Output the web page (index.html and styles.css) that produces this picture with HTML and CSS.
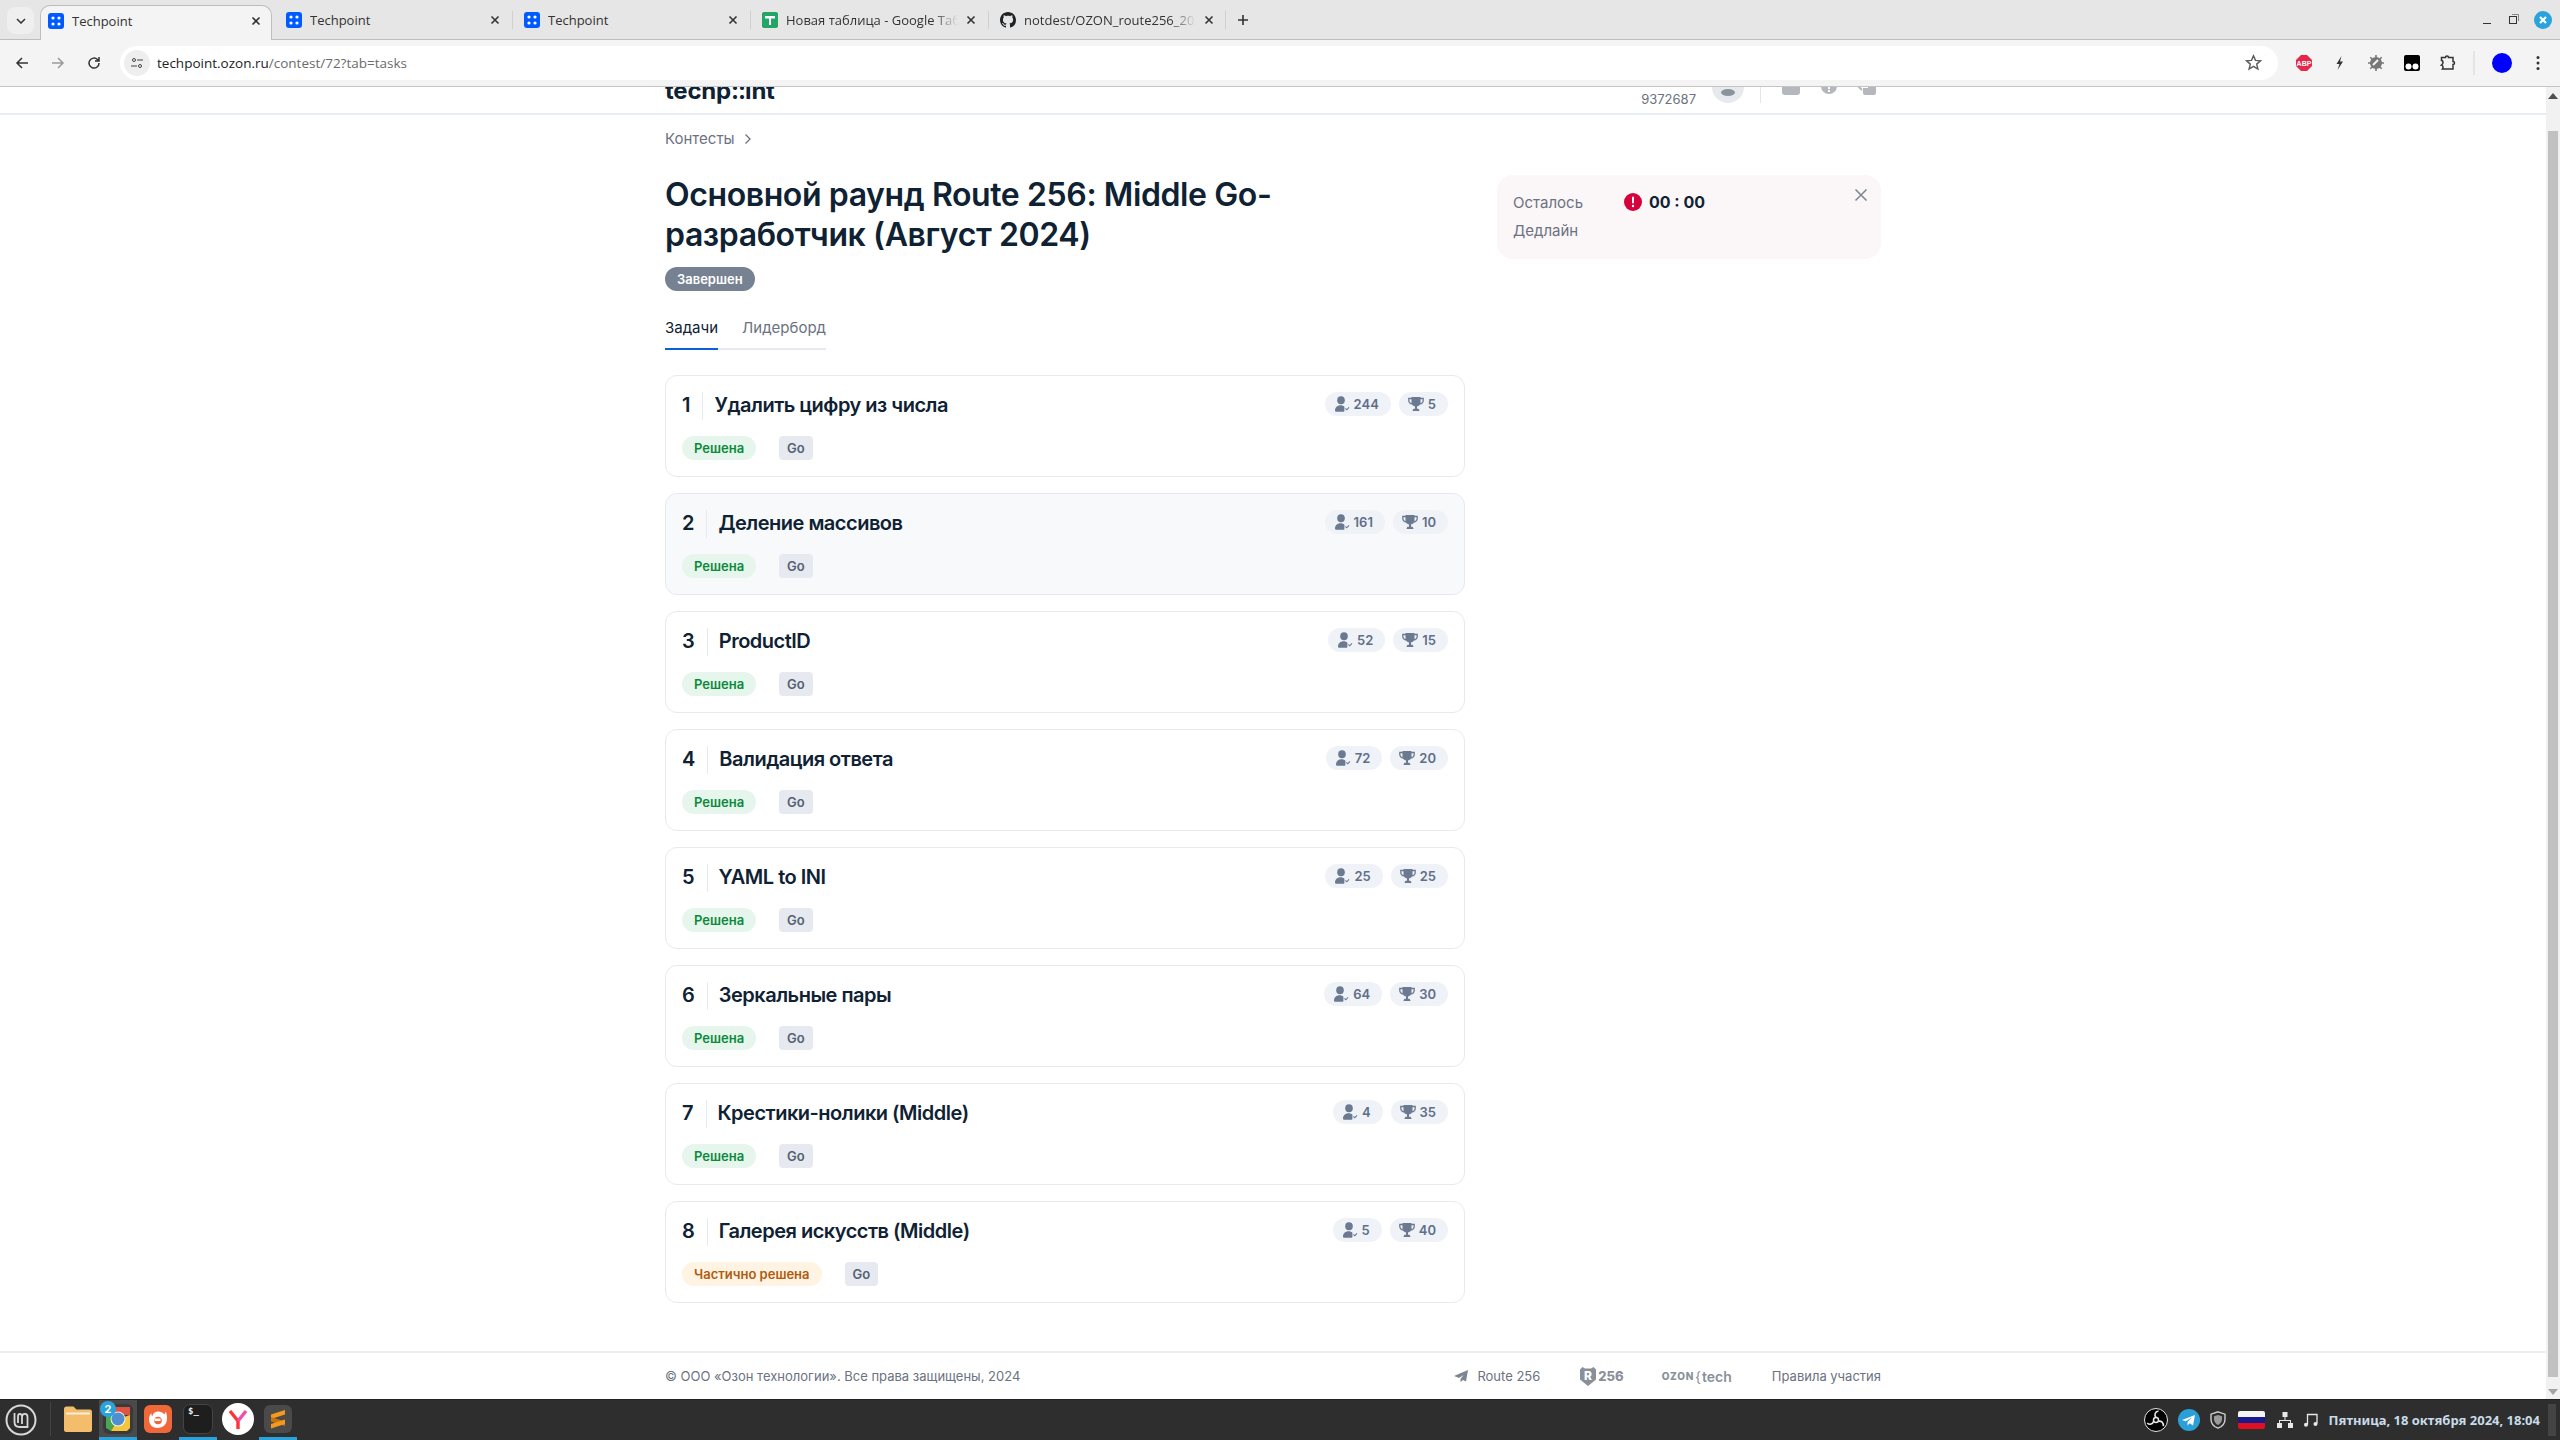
FILE: index.html
```html
<!DOCTYPE html>
<html lang="ru">
<head>
    <meta charset="UTF-8">
    <meta name="viewport" content="width=device-width, initial-scale=1.0">
    <title>Techpoint</title>
    <link rel="stylesheet" href="styles.css">
</head>
<body>
    <!-- shared icons -->
    <svg class="sprite" aria-hidden="true">
        <symbol id="fav-tp" viewBox="0 0 16 16">
            <rect width="16" height="16" rx="3" fill="#005bff"/>
            <circle cx="5" cy="5" r="1.6" fill="#fff"/><circle cx="11" cy="5" r="1.6" fill="#fff"/>
            <circle cx="5" cy="11" r="1.6" fill="#fff"/><circle cx="11" cy="11" r="1.6" fill="#fff"/>
        </symbol>
        <symbol id="i-x" viewBox="0 0 10 10">
            <path d="M1.5 1.5l7 7M8.500 1.500l-7 7" stroke="#333" stroke-width="1.600" fill="none"/>
        </symbol>
        <symbol id="i-user" viewBox="0 0 16 16">
            <ellipse cx="7" cy="4.200" rx="3.800" ry="4" fill="#6b7a90"/>
            <path d="M1 14.500c0-3.200 2.400-5.300 5.500-5.300 1.800 0 3 .5 3.900 1.500v4.300c0 .4-.3.700-.7.700H1.800c-.5 0-.8-.5-.8-1.200z" fill="#6b7a90"/>
            <path d="M11.400 12.400l1.400 1.400 2.200-2.400" stroke="#6b7a90" stroke-width="1.100" fill="none"/>
        </symbol>
        <symbol id="i-cup" viewBox="0 0 16 16">
            <path d="M3.500 1h9v5.300c0 2.600-2 4.400-4.500 4.400s-4.500-1.800-4.500-4.400z" fill="#6b7a90"/>
            <path d="M4 2.500H.8v2C.8 6.500 2.200 7.700 4.500 8M12 2.500h3.200v2c0 2-1.400 3.200-3.700 3.500" stroke="#6b7a90" stroke-width="1.300" fill="none"/>
            <path d="M7 10h2v2.700h1.600l1 2.300H4.400l1-2.300H7z" fill="#6b7a90"/>
        </symbol>
    </svg>

    <div class="browser">
        <!-- tab strip -->
        <div class="tabstrip">
            <div class="tab-menu">
                <svg width="10" height="6" viewBox="0 0 10 6"><path d="M1 1l4 4 4-4" stroke="#333" stroke-width="1.500" fill="none"/></svg>
            </div>
            <div class="tab tab-active">
                <svg class="tab-icon"><use href="#fav-tp"/></svg>
                <span class="tab-title">Techpoint</span>
                <svg class="tab-close"><use href="#i-x"/></svg>
            </div>
            <div class="tab">
                <svg class="tab-icon"><use href="#fav-tp"/></svg>
                <span class="tab-title">Techpoint</span>
                <svg class="tab-close"><use href="#i-x"/></svg>
            </div>
            <div class="tab tab-sep">
                <svg class="tab-icon"><use href="#fav-tp"/></svg>
                <span class="tab-title">Techpoint</span>
                <svg class="tab-close"><use href="#i-x"/></svg>
            </div>
            <div class="tab tab-sep">
                <svg class="tab-icon" viewBox="0 0 16 16">
                    <rect width="16" height="16" rx="2" fill="#23a566"/>
                    <path d="M3 4h10v2.500H9V13H7V6.500H3z" fill="#fff"/>
                </svg>
                <span class="tab-title tab-fade">Новая таблица - Google Таблицы</span>
                <svg class="tab-close"><use href="#i-x"/></svg>
            </div>
            <div class="tab tab-sep tab-last">
                <svg class="tab-icon" viewBox="0 0 16 16">
                    <path fill="#1f2328" d="M8 0C3.58 0 0 3.58 0 8c0 3.54 2.29 6.53 5.47 7.59.4.07.55-.17.55-.38 0-.19-.01-.82-.01-1.49-2.01.37-2.53-.49-2.69-.94-.09-.23-.48-.94-.82-1.13-.28-.15-.68-.52-.01-.53.63-.01 1.08.58 1.23.82.72 1.21 1.87.87 2.33.66.07-.52.28-.87.51-1.07-1.78-.2-3.64-.89-3.64-3.95 0-.87.31-1.59.82-2.15-.08-.2-.36-1.02.08-2.12 0 0 .67-.21 2.2.82.64-.18 1.32-.27 2-.27.68 0 1.36.09 2 .27 1.53-1.04 2.2-.82 2.2-.82.44 1.1.16 1.92.08 2.12.51.56.82 1.27.82 2.15 0 3.07-1.87 3.75-3.65 3.95.29.25.54.73.54 1.48 0 1.07-.01 1.930-.01 2.200 0 .21.15.46.55.38A8.013 8.013 0 0016 8c0-4.420-3.580-8-8-8z"/>
                </svg>
                <span class="tab-title tab-fade">notdest/OZON_route256_2024</span>
                <svg class="tab-close"><use href="#i-x"/></svg>
            </div>
            <div class="tab-new">
                <svg width="12" height="12" viewBox="0 0 12 12"><path d="M6 1v10M1 6h10" stroke="#333" stroke-width="1.600"/></svg>
            </div>
            <div class="win-controls">
                <svg width="14" height="14" viewBox="0 0 14 14"><path d="M3 10.500h8" stroke="#333" stroke-width="1"/></svg>
                <svg width="14" height="14" viewBox="0 0 14 14"><rect x="2.500" y="3.500" width="7" height="7" fill="none" stroke="#333"/><path d="M5 1.500h6.500V8" fill="none" stroke="#888"/></svg>
                <svg width="18" height="18" viewBox="0 0 18 18">
                    <circle cx="9" cy="9" r="9" fill="#2aa3dc"/>
                    <path d="M6 6l6 6M12 6l-6 6" stroke="#fff" stroke-width="2.200"/>
                </svg>
            </div>
        </div>

        <!-- toolbar -->
        <div class="toolbar">
            <svg class="nav-btn" viewBox="0 0 16 16"><path d="M14 8H3M8 3L3 8l5 5" stroke="#333" stroke-width="1.500" fill="none"/></svg>
            <svg class="nav-btn" viewBox="0 0 16 16"><path d="M2 8h11M8 3l5 5-5 5" stroke="#9a9a9a" stroke-width="1.500" fill="none"/></svg>
            <svg class="nav-btn" viewBox="0 0 16 16"><path d="M13 8a5 5 0 1 1-1.500-3.500L13 6M13 2v4H9" stroke="#333" stroke-width="1.500" fill="none"/></svg>
            <div class="urlbar">
                <div class="site-icon">
                    <svg width="14" height="14" viewBox="0 0 14 14"><circle cx="4" cy="4" r="1.500" fill="none" stroke="#444"/><path d="M7 4h6M1 10h6" stroke="#444"/><circle cx="10" cy="10" r="1.500" fill="none" stroke="#444"/></svg>
                </div>
                <span class="url"><span class="url-host">techpoint.ozon.ru</span>/contest/72?tab=tasks</span>
                <svg class="url-star" width="17" height="17" viewBox="0 0 17 17"><path d="M8.500 1.800l2 4.600 5 .4-3.800 3.300 1.200 4.900-4.400-2.600-4.400 2.600 1.200-4.900L1.500 6.800l5-.4z" fill="none" stroke="#5a5a5a" stroke-width="1.400"/></svg>
            </div>
            <div class="ext-list">
                <svg class="ext" viewBox="0 0 16 16">
                    <path d="M5 0h6l5 5v6l-5 5H5l-5-5V5z" fill="#e8264a"/>
                    <text x="8" y="10.500" class="abp">ABP</text>
                </svg>
                <svg class="ext" viewBox="0 0 16 16"><path d="M9.500 1L4.500 9h3l-2 6 5.500-8.500H8z" fill="#333"/></svg>
                <svg class="ext" viewBox="0 0 16 16">
                    <circle cx="8" cy="8" r="6" fill="#777"/>
                    <path d="M8 0v3M8 13v3M0 8h3M13 8h3M2.300 2.300l2 2M11.700 11.700l2 2M13.700 2.300l-2 2M4.300 11.700l-2 2" stroke="#777" stroke-width="1.600"/>
                    <path d="M5 10l5-5" stroke="#f4f4f4" stroke-width="2"/>
                </svg>
                <svg class="ext" viewBox="0 0 16 16">
                    <rect width="16" height="16" rx="2" fill="#000"/>
                    <circle cx="4.500" cy="11.500" r="3" fill="#fff"/><circle cx="11.500" cy="11.500" r="3" fill="#fff"/>
                </svg>
                <svg class="ext" viewBox="0 0 16 16"><path d="M1.500 2.500h4c0-2 3-2 3 0h4.500v4c2 0 2 3 0 3v4.500H2.500c1.500-2-.5-4-1-4 2-1.500 2-4.500 0-4.500z" fill="none" stroke="#333" stroke-width="1.500"/></svg>
                <div class="ext-sep"></div>
                <div class="profile"></div>
                <svg class="ext ext-kebab" viewBox="0 0 4 16"><circle cx="2" cy="2.500" r="1.500" fill="#333"/><circle cx="2" cy="8" r="1.500" fill="#333"/><circle cx="2" cy="13.500" r="1.500" fill="#333"/></svg>
            </div>
        </div>

        <div class="viewport">
            <div class="page">
                <!-- site header, scrolled so the top is cut off -->
                <header class="site-header">
                    <div class="wrap header-row">
                        <div class="logo">techp<span class="logo-dots">::</span>int</div>
                        <div class="header-right">
                            <span class="user-id">9372687</span>
                            <div class="avatar"><div class="avatar-shape"></div></div>
                            <div class="header-sep"></div>
                            <svg class="head-icon" viewBox="0 0 18 26"><rect x="0" width="18" height="26" rx="3" fill="#b4b8bc"/><path d="M1 13l5-3 4 2 6-4" stroke="#fff" fill="none"/></svg>
                            <svg class="head-icon" viewBox="0 0 18 26"><circle cx="9" cy="17" r="8" fill="#b4b8bc"/><rect x="8" y="13" width="2" height="7" fill="#fff"/><rect x="8" y="21" width="2" height="2" fill="#fff"/></svg>
                            <svg class="head-icon" viewBox="0 0 18 26"><rect x="5" width="13" height="26" rx="2" fill="#b4b8bc"/><path d="M0 17h10M4 13l-4 4 4 4" stroke="#b4b8bc" stroke-width="2" fill="none"/><path d="M5 15h5v4H5z" fill="#fff"/></svg>
                        </div>
                    </div>
                </header>

                <main class="wrap content">
                    <div class="content-main">
                        <nav class="breadcrumb">
                            <span>Контесты</span>
                            <svg width="8" height="12" viewBox="0 0 8 12"><path d="M1.500 1.500L6 6l-4.500 4.500" stroke="#6b7280" stroke-width="1.300" fill="none"/></svg>
                        </nav>
                        <h1 class="contest-title">Основной раунд Route 256: Middle Go-разработчик (Август 2024)</h1>
                        <span class="badge-done">Завершен</span>
                        <div class="tabs">
                            <div class="tabs-item tabs-item-active">Задачи</div>
                            <div class="tabs-item">Лидерборд</div>
                        </div>

                        <div class="task-list">
                            <div class="task">
                                <div class="task-top">
                                    <span class="task-num">1</span>
                                    <span class="task-name">Удалить цифру из числа</span>
                                    <div class="chips">
                                        <span class="chip"><svg class="chip-icon"><use href="#i-user"/></svg>244</span>
                                        <span class="chip"><svg class="chip-icon"><use href="#i-cup"/></svg>5</span>
                                    </div>
                                </div>
                                <div class="task-tags"><span class="status">Решена</span><span class="lang">Go</span></div>
                            </div>
                            <div class="task task-hover">
                                <div class="task-top">
                                    <span class="task-num">2</span>
                                    <span class="task-name">Деление массивов</span>
                                    <div class="chips">
                                        <span class="chip"><svg class="chip-icon"><use href="#i-user"/></svg>161</span>
                                        <span class="chip"><svg class="chip-icon"><use href="#i-cup"/></svg>10</span>
                                    </div>
                                </div>
                                <div class="task-tags"><span class="status">Решена</span><span class="lang">Go</span></div>
                            </div>
                            <div class="task">
                                <div class="task-top">
                                    <span class="task-num">3</span>
                                    <span class="task-name">ProductID</span>
                                    <div class="chips">
                                        <span class="chip"><svg class="chip-icon"><use href="#i-user"/></svg>52</span>
                                        <span class="chip"><svg class="chip-icon"><use href="#i-cup"/></svg>15</span>
                                    </div>
                                </div>
                                <div class="task-tags"><span class="status">Решена</span><span class="lang">Go</span></div>
                            </div>
                            <div class="task">
                                <div class="task-top">
                                    <span class="task-num">4</span>
                                    <span class="task-name">Валидация ответа</span>
                                    <div class="chips">
                                        <span class="chip"><svg class="chip-icon"><use href="#i-user"/></svg>72</span>
                                        <span class="chip"><svg class="chip-icon"><use href="#i-cup"/></svg>20</span>
                                    </div>
                                </div>
                                <div class="task-tags"><span class="status">Решена</span><span class="lang">Go</span></div>
                            </div>
                            <div class="task">
                                <div class="task-top">
                                    <span class="task-num">5</span>
                                    <span class="task-name">YAML to INI</span>
                                    <div class="chips">
                                        <span class="chip"><svg class="chip-icon"><use href="#i-user"/></svg>25</span>
                                        <span class="chip"><svg class="chip-icon"><use href="#i-cup"/></svg>25</span>
                                    </div>
                                </div>
                                <div class="task-tags"><span class="status">Решена</span><span class="lang">Go</span></div>
                            </div>
                            <div class="task">
                                <div class="task-top">
                                    <span class="task-num">6</span>
                                    <span class="task-name">Зеркальные пары</span>
                                    <div class="chips">
                                        <span class="chip"><svg class="chip-icon"><use href="#i-user"/></svg>64</span>
                                        <span class="chip"><svg class="chip-icon"><use href="#i-cup"/></svg>30</span>
                                    </div>
                                </div>
                                <div class="task-tags"><span class="status">Решена</span><span class="lang">Go</span></div>
                            </div>
                            <div class="task">
                                <div class="task-top">
                                    <span class="task-num">7</span>
                                    <span class="task-name">Крестики-нолики (Middle)</span>
                                    <div class="chips">
                                        <span class="chip"><svg class="chip-icon"><use href="#i-user"/></svg>4</span>
                                        <span class="chip"><svg class="chip-icon"><use href="#i-cup"/></svg>35</span>
                                    </div>
                                </div>
                                <div class="task-tags"><span class="status">Решена</span><span class="lang">Go</span></div>
                            </div>
                            <div class="task">
                                <div class="task-top">
                                    <span class="task-num">8</span>
                                    <span class="task-name">Галерея искусств (Middle)</span>
                                    <div class="chips">
                                        <span class="chip"><svg class="chip-icon"><use href="#i-user"/></svg>5</span>
                                        <span class="chip"><svg class="chip-icon"><use href="#i-cup"/></svg>40</span>
                                    </div>
                                </div>
                                <div class="task-tags"><span class="status status-partial">Частично решена</span><span class="lang">Go</span></div>
                            </div>
                        </div>
                    </div>

                    <aside class="timer">
                        <svg class="timer-close" width="14" height="14" viewBox="0 0 14 14"><path d="M1.500 1.500l11 11M12.500 1.500l-11 11" stroke="#7d8590" stroke-width="1.500"/></svg>
                        <div class="timer-row">
                            <span class="timer-label">Осталось</span>
                            <svg class="timer-alert" width="18" height="18" viewBox="0 0 18 18">
                                <circle cx="9" cy="9" r="9" fill="#d6003c"/>
                                <rect x="8" y="3.500" width="2" height="7" rx="1" fill="#fff"/>
                                <circle cx="9" cy="13" r="1.200" fill="#fff"/>
                            </svg>
                            <span class="timer-value">00 : 00</span>
                        </div>
                        <div class="timer-row">
                            <span class="timer-label">Дедлайн</span>
                        </div>
                    </aside>
                </main>

                <footer class="site-footer">
                    <div class="wrap footer-row">
                        <span>© ООО «Озон технологии». Все права защищены, 2024</span>
                        <div class="footer-links">
                            <span class="footer-route">
                                <svg width="14" height="12" viewBox="0 0 14 12"><path d="M14 0L0 6l4 1.500 1 .5L9.500 5 6.500 9v3l2.500-2 3 1.500z" fill="#7d8590"/></svg>
                                Route 256
                            </span>
                            <span class="footer-r256">
                                <svg width="16" height="19" viewBox="0 0 16 19">
                                    <path d="M2.500 0L5 1.500h6L13.500 0 16 2.500v10L8 19 0 12.500v-10z" fill="#8a9099"/>
                                    <text x="8" y="13" class="r-mark">R</text>
                                </svg>
                                256
                            </span>
                            <span class="footer-ozon"><span class="footer-word">OZON</span><span class="footer-brace">{</span>tech</span>
                            <span>Правила участия</span>
                        </div>
                    </div>
                </footer>
            </div>

            <div class="scrollbar">
                <svg width="10" height="6" viewBox="0 0 10 6"><path d="M5 0l5 6H0z" fill="#505050"/></svg>
                <div class="scroll-thumb"></div>
                <svg width="10" height="6" viewBox="0 0 10 6"><path d="M0 0h10L5 6z" fill="#a3a3a3"/></svg>
            </div>
        </div>

        <!-- desktop panel -->
        <div class="taskbar">
            <div class="menu-btn">
                <svg width="32" height="32" viewBox="0 0 32 32">
                    <circle cx="16" cy="16" r="14.500" fill="none" stroke="#d8d8d8" stroke-width="2"/>
                    <path d="M9.500 9v9c0 3 2 5 5 5h8V13c0-4-5-4-5.500-.5V20M17 12.500c-.5-3.500-4-3.500-4 .5v6" fill="none" stroke="#d8d8d8" stroke-width="1.800"/>
                </svg>
            </div>
            <div class="panel-sep"></div>
            <div class="launcher">
                <div class="launch-item">
                    <svg width="28" height="26" viewBox="0 0 28 26">
                        <path d="M0 3c0-1.500 1-2.500 2.500-2.500h7l3 3H26c1 0 2 1 2 2V24c0 1-1 2-2 2H2c-1 0-2-1-2-2z" fill="#f3bd6c"/>
                        <path d="M2 6.500h24v2H2z" fill="#f7eddd"/>
                    </svg>
                </div>
                <div class="launch-item launch-active launch-running">
                    <svg width="30" height="30" viewBox="0 0 30 30">
                        <rect width="30" height="30" rx="6" fill="#3a3a3a"/>
                        <path d="M3 3h24v8H15z" fill="#e05345"/>
                        <path d="M3 6v18l5 3 7-12z" fill="#46a850"/>
                        <path d="M27 11v13l-3 3H8l7-12z" fill="#f2c53d"/>
                        <circle cx="15" cy="15" r="7.500" fill="#fff" fill-opacity=".85"/>
                        <circle cx="15" cy="15" r="6.500" fill="#4f8fd0"/>
                    </svg>
                    <span class="launch-badge">2</span>
                </div>
                <div class="launch-item">
                    <svg width="28" height="28" viewBox="0 0 28 28">
                        <rect width="28" height="28" rx="6" fill="#f0683a"/>
                        <path d="M14 6.500c3 0 5 1 6.500 3l1-3c1.500 2 1.500 5 1.500 7.500 0 5-4 9-9.500 9S5 19 5 14c0-2.500 1-4.500 2.500-6-.3 1.500 0 2.500.8 3.200C9 8.500 11 6.500 14 6.500z" fill="#fff"/>
                        <circle cx="14" cy="15.500" r="3.800" fill="#f0683a"/>
                        <path d="M10.500 13.500h6v2.500h-6z" fill="#fff"/>
                    </svg>
                </div>
                <div class="launch-item launch-running">
                    <div class="term-icon">$_</div>
                </div>
                <div class="launch-item">
                    <svg width="32" height="32" viewBox="0 0 32 32">
                        <circle cx="16" cy="16" r="16" fill="#fff"/>
                        <path d="M8 8l8 10v8" stroke="#f33" stroke-width="3.400" fill="none"/>
                        <path d="M24 8l-8 10" stroke="#ef4fa8" stroke-width="3.400" fill="none"/>
                    </svg>
                </div>
                <div class="launch-item launch-running">
                    <svg width="28" height="28" viewBox="0 0 28 28">
                        <rect width="28" height="28" rx="6" fill="#4a4a4a"/>
                        <path d="M21 5L7 9.500V14l14-4.500z" fill="#f59a1c"/>
                        <path d="M7 12l14 4.500V21L7 16.500z" fill="#c9720f"/>
                        <path d="M21 14.500V19L7 23.500V19z" fill="#f59a1c"/>
                    </svg>
                </div>
            </div>
            <div class="tray">
                <svg class="tray-icon" width="24" height="24" viewBox="0 0 24 24">
                    <circle cx="12" cy="12" r="11.500" fill="#000" stroke="#e5e5e5"/>
                    <circle cx="12" cy="12" r="2.500" fill="none" stroke="#e5e5e5" stroke-width="1.500"/>
                    <path d="M12 9.500C10 7 11 3.500 14.500 3M14.300 13.200c3-.5 5.500 1.500 5 5M9.700 13.200c-1 3-4 4-6.500 2" fill="none" stroke="#e5e5e5" stroke-width="1.600"/>
                </svg>
                <svg class="tray-icon" width="22" height="22" viewBox="0 0 22 22">
                    <circle cx="11" cy="11" r="11" fill="#2b9fd8"/>
                    <path d="M17 6L4 11l3.800 1.300L14 8.500 9.500 13v3.500l2.200-2.200 3.300 2.200z" fill="#fff"/>
                </svg>
                <svg class="tray-icon" width="16" height="18" viewBox="0 0 16 18">
                    <path d="M8 .8l7 2.400v5c0 4-3 7.500-7 9-4-1.500-7-5-7-9v-5z" fill="none" stroke="#cfcfcf" stroke-width="1.400"/>
                    <path d="M8 4l4 1.300v3c0 2.500-1.700 4.500-4 5.700-2.300-1.200-4-3.200-4-5.700v-3z" fill="#9a9a9a"/>
                </svg>
                <div class="flag"><span class="flag-w"></span><span class="flag-b"></span><span class="flag-r"></span></div>
                <svg class="tray-icon tray-net" width="16" height="16" viewBox="0 0 16 16" fill="#e8e8e8">
                    <rect x="5.500" y="0" width="5" height="5"/><rect x="0" y="11" width="5" height="5"/><rect x="11" y="11" width="5" height="5"/>
                    <path d="M7.500 5h1v3H14v3h-1V9H3v2H2V8h5.500z"/>
                </svg>
                <svg class="tray-icon" width="14" height="14" viewBox="0 0 14 14">
                    <path d="M3.500 11.500V1.500h9.500v9" fill="none" stroke="#e8e8e8" stroke-width="1.300"/>
                    <circle cx="2" cy="11.800" r="2" fill="#e8e8e8"/><circle cx="11.500" cy="11" r="2" fill="#e8e8e8"/>
                </svg>
                <span class="clock">Пятница, 18 октября 2024, 18:04</span>
                <div class="panel-grip"></div>
            </div>
        </div>
    </div>
</body>
</html>
```

FILE: styles.css
```css
/* Basic page setup */
* {
    box-sizing: border-box;
}

html,
body {
    margin: 0;
    height: 100%;
    overflow: hidden;
    background: #fff;
}

.sprite {
    display: none;
}

.browser {
    display: flex;
    flex-direction: column;
    height: 1440px;
    font-family: "Inter", "Liberation Sans", sans-serif;
}

/* Tab strip */
.tabstrip {
    display: flex;
    align-items: stretch;
    height: 40px;
    padding: 5px 0 0 7px;
    background: #e6e6e6;
    border-bottom: 1px solid #bdbdbd;
    font-family: "Open Sans", "Noto Sans", sans-serif;
    font-size: 13px;
    color: #333;
}

.tab-menu {
    display: flex;
    align-items: center;
    justify-content: center;
    width: 27px;
    height: 27px;
    margin: 2px 2px 0 0;
    border-radius: 8px;
    background: #efefef;
}

.tab {
    position: relative;
    display: flex;
    align-items: center;
    gap: 8px;
    width: 238px;
    height: 35px;
    padding: 0 12px 5px;
}

.tab-active {
    background: #f4f4f4;
    border: 1px solid #bdbdbd;
    border-bottom: none;
    border-radius: 10px 10px 0 0;
    margin: 0 2px 0 4px;
    width: 232px;
    padding: 0 10px 5px 7px;
}

.tab-sep::before {
    content: "";
    position: absolute;
    left: 0;
    top: 6px;
    bottom: 11px;
    width: 1px;
    background: #cfcfcf;
}

.tab-last::after {
    content: "";
    position: absolute;
    right: 0;
    top: 6px;
    bottom: 11px;
    width: 1px;
    background: #cfcfcf;
}

.tab-icon {
    width: 16px;
    height: 16px;
    flex: none;
}

.tab-title {
    flex: 1;
    min-width: 0;
    white-space: nowrap;
    overflow: hidden;
}

.tab-fade {
    -webkit-mask-image: linear-gradient(to right, #000 85%, transparent 100%);
    mask-image: linear-gradient(to right, #000 85%, transparent 100%);
}

.tab-close {
    width: 10px;
    height: 10px;
    flex: none;
}

.tab-new {
    display: flex;
    align-items: center;
    margin: 0 0 0 11px;
    height: 30px;
}

.win-controls {
    display: flex;
    align-items: center;
    gap: 13px;
    margin-left: auto;
    height: 30px;
    padding-right: 8px;
}

/* Toolbar */
.toolbar {
    display: flex;
    align-items: center;
    height: 47px;
    padding: 0 0 1px 14px;
    background: #f4f4f4;
    border-bottom: 1px solid #c4c4c4;
}

.nav-btn {
    width: 16px;
    height: 16px;
    margin-right: 20px;
    flex: none;
}

.urlbar {
    display: flex;
    align-items: center;
    width: 2158px;
    height: 34px;
    margin-left: -2px;
    padding: 0 16px 0 4px;
    border-radius: 17px;
    background: #fff;
}

.site-icon {
    display: flex;
    align-items: center;
    justify-content: center;
    width: 26px;
    height: 26px;
    margin-right: 7px;
    border-radius: 50%;
    background: #eeeeee;
}

.url {
    font-family: "Open Sans", "Noto Sans", sans-serif;
    font-size: 13.5px;
    color: #6c6c6c;
}

.url-host {
    color: #222;
}

.url-star {
    margin-left: auto;
}

.ext-list {
    display: flex;
    align-items: center;
    margin-left: 18px;
}

.ext {
    width: 16px;
    height: 16px;
    margin-right: 20px;
    flex: none;
}

.abp {
    font-family: "Liberation Sans", sans-serif;
    font-size: 7px;
    font-weight: 700;
    fill: #fff;
    text-anchor: middle;
}

.ext-sep {
    width: 2px;
    height: 24px;
    margin: 0 0 0 -3px;
    background: #e4e4e4;
}

.profile {
    width: 20px;
    height: 20px;
    margin: 0 24px 0 17px;
    border-radius: 50%;
    background: #0000ff;
}

.ext-kebab {
    width: 4px;
    margin: 0;
}

/* Page area */
.viewport {
    flex: 1;
    min-height: 0;
    display: flex;
}

.page {
    flex: 1;
    min-width: 0;
    display: flex;
    flex-direction: column;
}

.wrap {
    width: 1216px;
    margin: 0 auto;
}

.site-header {
    height: 28px;
    flex: none;
    overflow: hidden;
    border-bottom: 2px solid #e8edf2;
}

.header-row {
    display: flex;
    align-items: flex-end;
    justify-content: space-between;
    height: 26px;
}

.logo {
    font-size: 24px;
    font-weight: 700;
    line-height: 30px;
    color: #0f2233;
    letter-spacing: -0.2px;
    margin-bottom: 7px;
}

.logo-dots {
    letter-spacing: -1px;
}

.header-right {
    display: flex;
    align-items: flex-end;
}

.user-id {
    font-size: 13px;
    line-height: 16px;
    color: #6b7280;
    margin: 0 16px 6px 0;
}

.avatar {
    display: flex;
    align-items: flex-end;
    justify-content: center;
    width: 32px;
    height: 32px;
    margin-bottom: 10px;
    border-radius: 50%;
    background: #e6eaee;
}

.avatar-shape {
    width: 14px;
    height: 7px;
    margin-bottom: 7px;
    border-radius: 50%;
    background: #8b949c;
}

.header-sep {
    width: 1px;
    height: 16px;
    margin: 0 21px 10px 16px;
    background: #e3e6ea;
}

.head-icon {
    width: 18px;
    height: 26px;
    margin: 0 20px 18px 0;
}

.head-icon:last-child {
    margin-right: 5px;
}

/* Main content */
.content {
    display: flex;
    align-items: flex-start;
    gap: 32px;
    flex: 1;
    min-height: 0;
}

.content-main {
    width: 800px;
    flex: none;
}

.breadcrumb {
    display: flex;
    align-items: center;
    gap: 9px;
    margin-top: 14px;
    font-size: 15px;
    line-height: 20px;
    color: #6b7280;
}

.contest-title {
    margin: 26px 0 0;
    font-size: 32px;
    font-weight: 600;
    line-height: 40px;
    letter-spacing: -0.4px;
    color: #0f2233;
}

.badge-done {
    display: inline-block;
    height: 24px;
    margin-top: 12px;
    padding: 0 12px;
    border-radius: 12px;
    background: #768192;
    color: #fff;
    font-size: 13px;
    font-weight: 600;
    line-height: 24px;
    vertical-align: top;
}

.tabs {
    display: flex;
    width: fit-content;
    gap: 24px;
    margin-top: 26px;
    border-bottom: 2px solid #e6eaf0;
    font-size: 15px;
    color: #6b7280;
}

.tabs-item {
    height: 33px;
    margin-bottom: -2px;
    line-height: 20px;
    border-bottom: 2px solid transparent;
    padding-top: 1px;
}

.tabs-item-active {
    color: #0f2233;
    border-bottom-color: #0a5fe0;
}

.task-list {
    display: flex;
    flex-direction: column;
    gap: 16px;
    margin-top: 25px;
}

.task {
    height: 102px;
    padding: 16px;
    border: 1px solid #e6eaf0;
    border-radius: 12px;
    background: #fff;
}

.task-hover {
    background: #f8f9fb;
}

.task-top {
    display: flex;
    align-items: flex-start;
    height: 28px;
}

.task-num,
.task-name {
    font-size: 20px;
    font-weight: 600;
    line-height: 27px;
    color: #0f2233;
}

.task-name {
    letter-spacing: -0.5px;
}

.task-num {
    height: 28px;
    padding-right: 12px;
    margin-right: 11px;
    border-right: 1px solid #e6eaf0;
}

.chips {
    display: flex;
    gap: 8px;
    margin-left: auto;
}

.chip {
    display: flex;
    align-items: center;
    gap: 4px;
    height: 24px;
    padding: 0 12px 0 9px;
    border-radius: 12px;
    background: #eff2f7;
    color: #5f6f89;
    font-size: 13px;
    font-weight: 600;
}

.chip-icon {
    width: 16px;
    height: 16px;
    flex: none;
}

.task-tags {
    display: flex;
    gap: 23px;
    margin-top: 16px;
}

.status {
    height: 24px;
    padding: 0 12px;
    border-radius: 12px;
    background: #e6f6ec;
    color: #0b8a3c;
    font-size: 13px;
    font-weight: 600;
    line-height: 24px;
}

.status-partial {
    background: #fff4e3;
    color: #b25b0f;
}

.lang {
    height: 24px;
    padding: 0 8px;
    border-radius: 4px;
    background: #e6eaf0;
    color: #556070;
    font-size: 13px;
    font-weight: 600;
    line-height: 24px;
}

/* Timer panel */
.timer {
    position: relative;
    width: 384px;
    height: 84px;
    margin-top: 60px;
    padding: 13px 16px;
    border-radius: 16px;
    background: #fbf6f8;
}

.timer-row {
    display: flex;
    align-items: center;
    height: 28px;
}

.timer-label {
    width: 111px;
    font-size: 15px;
    color: #6b7280;
}

.timer-alert {
    flex: none;
    margin-right: 7px;
}

.timer-value {
    font-size: 16px;
    font-weight: 700;
    color: #0f2233;
}

.timer-close {
    position: absolute;
    top: 13px;
    right: 13px;
}

/* Footer */
.site-footer {
    height: 48px;
    flex: none;
    border-top: 2px solid #eceff2;
}

.footer-row {
    display: flex;
    align-items: center;
    justify-content: space-between;
    height: 46px;
    font-size: 13px;
    color: #6b7280;
}

.footer-links {
    display: flex;
    align-items: center;
    gap: 40px;
}

.footer-route {
    display: flex;
    align-items: center;
    gap: 9px;
}

.footer-r256 {
    display: flex;
    align-items: center;
    gap: 2px;
    margin-right: -2px;
    font-weight: 800;
    color: #8a9099;
}

.r-mark {
    font-family: "Inter", sans-serif;
    font-size: 12px;
    font-weight: 800;
    fill: #fff;
    text-anchor: middle;
}

.footer-ozon {
    display: flex;
    align-items: center;
    font-size: 14px;
    font-weight: 600;
    color: #8a9099;
}

.footer-word {
    font-size: 10px;
    font-weight: 800;
    letter-spacing: 0.7px;
}

.footer-brace {
    margin: 0 1px;
    font-weight: 400;
}

/* Scrollbar */
.scrollbar {
    display: flex;
    flex-direction: column;
    align-items: center;
    width: 14px;
    flex: none;
    padding: 6px 0 4px;
    background: #f1f1f1;
}

.scroll-thumb {
    flex: 1;
    margin: 32px 2px 12px;
    width: 10px;
    background: #c1c1c1;
}

/* Desktop panel */
.taskbar {
    display: flex;
    align-items: stretch;
    height: 41px;
    flex: none;
    background: #2e2e2e;
    border-top: 1px solid #222;
}

.menu-btn {
    display: flex;
    align-items: center;
    padding-left: 5px;
    width: 50px;
}

.panel-sep {
    width: 1px;
    margin: 2px 0 4px;
    background: #444;
}

.launcher {
    display: flex;
    margin-left: 8px;
    gap: 2px;
}

.launch-item {
    position: relative;
    display: flex;
    align-items: center;
    justify-content: center;
    width: 38px;
    border-bottom: 3px solid transparent;
}

.launch-running {
    border-bottom-color: #2aa3dc;
}

.launch-active {
    background: #4a4a4a;
}

.launch-badge {
    position: absolute;
    top: 1px;
    left: 1px;
    width: 16px;
    height: 16px;
    border-radius: 50%;
    background: #2aa3dc;
    color: #fff;
    font-size: 11px;
    font-weight: 700;
    line-height: 16px;
    text-align: center;
}

.term-icon {
    width: 30px;
    height: 30px;
    padding: 1px 0 0 4px;
    border-radius: 7px;
    background: #1e1e1e;
    border: 1px solid #444;
    color: #eee;
    font-family: "DejaVu Sans Mono", monospace;
    font-size: 9px;
    font-weight: 700;
    line-height: 11px;
}

.tray {
    display: flex;
    align-items: center;
    margin-left: auto;
    padding-right: 4px;
}

.tray-icon {
    flex: none;
    margin-right: 10px;
}

.tray-net {
    margin-right: 11px;
}

.flag {
    display: flex;
    flex-direction: column;
    width: 27px;
    height: 18px;
    margin: 0 12px 0 2px;
    border-radius: 2px;
    overflow: hidden;
}

.flag span {
    flex: 1;
}

.flag-w {
    background: #f4f4f4;
}

.flag-b {
    background: #1a1a8c;
}

.flag-r {
    background: #e01020;
}

.clock {
    margin-left: 1px;
    font-family: "Noto Sans", sans-serif;
    font-size: 13px;
    font-weight: 700;
    color: #c9dbe8;
    white-space: nowrap;
}

.panel-grip {
    width: 8px;
    height: 32px;
    margin-left: 8px;
    background: #444;
}
```
